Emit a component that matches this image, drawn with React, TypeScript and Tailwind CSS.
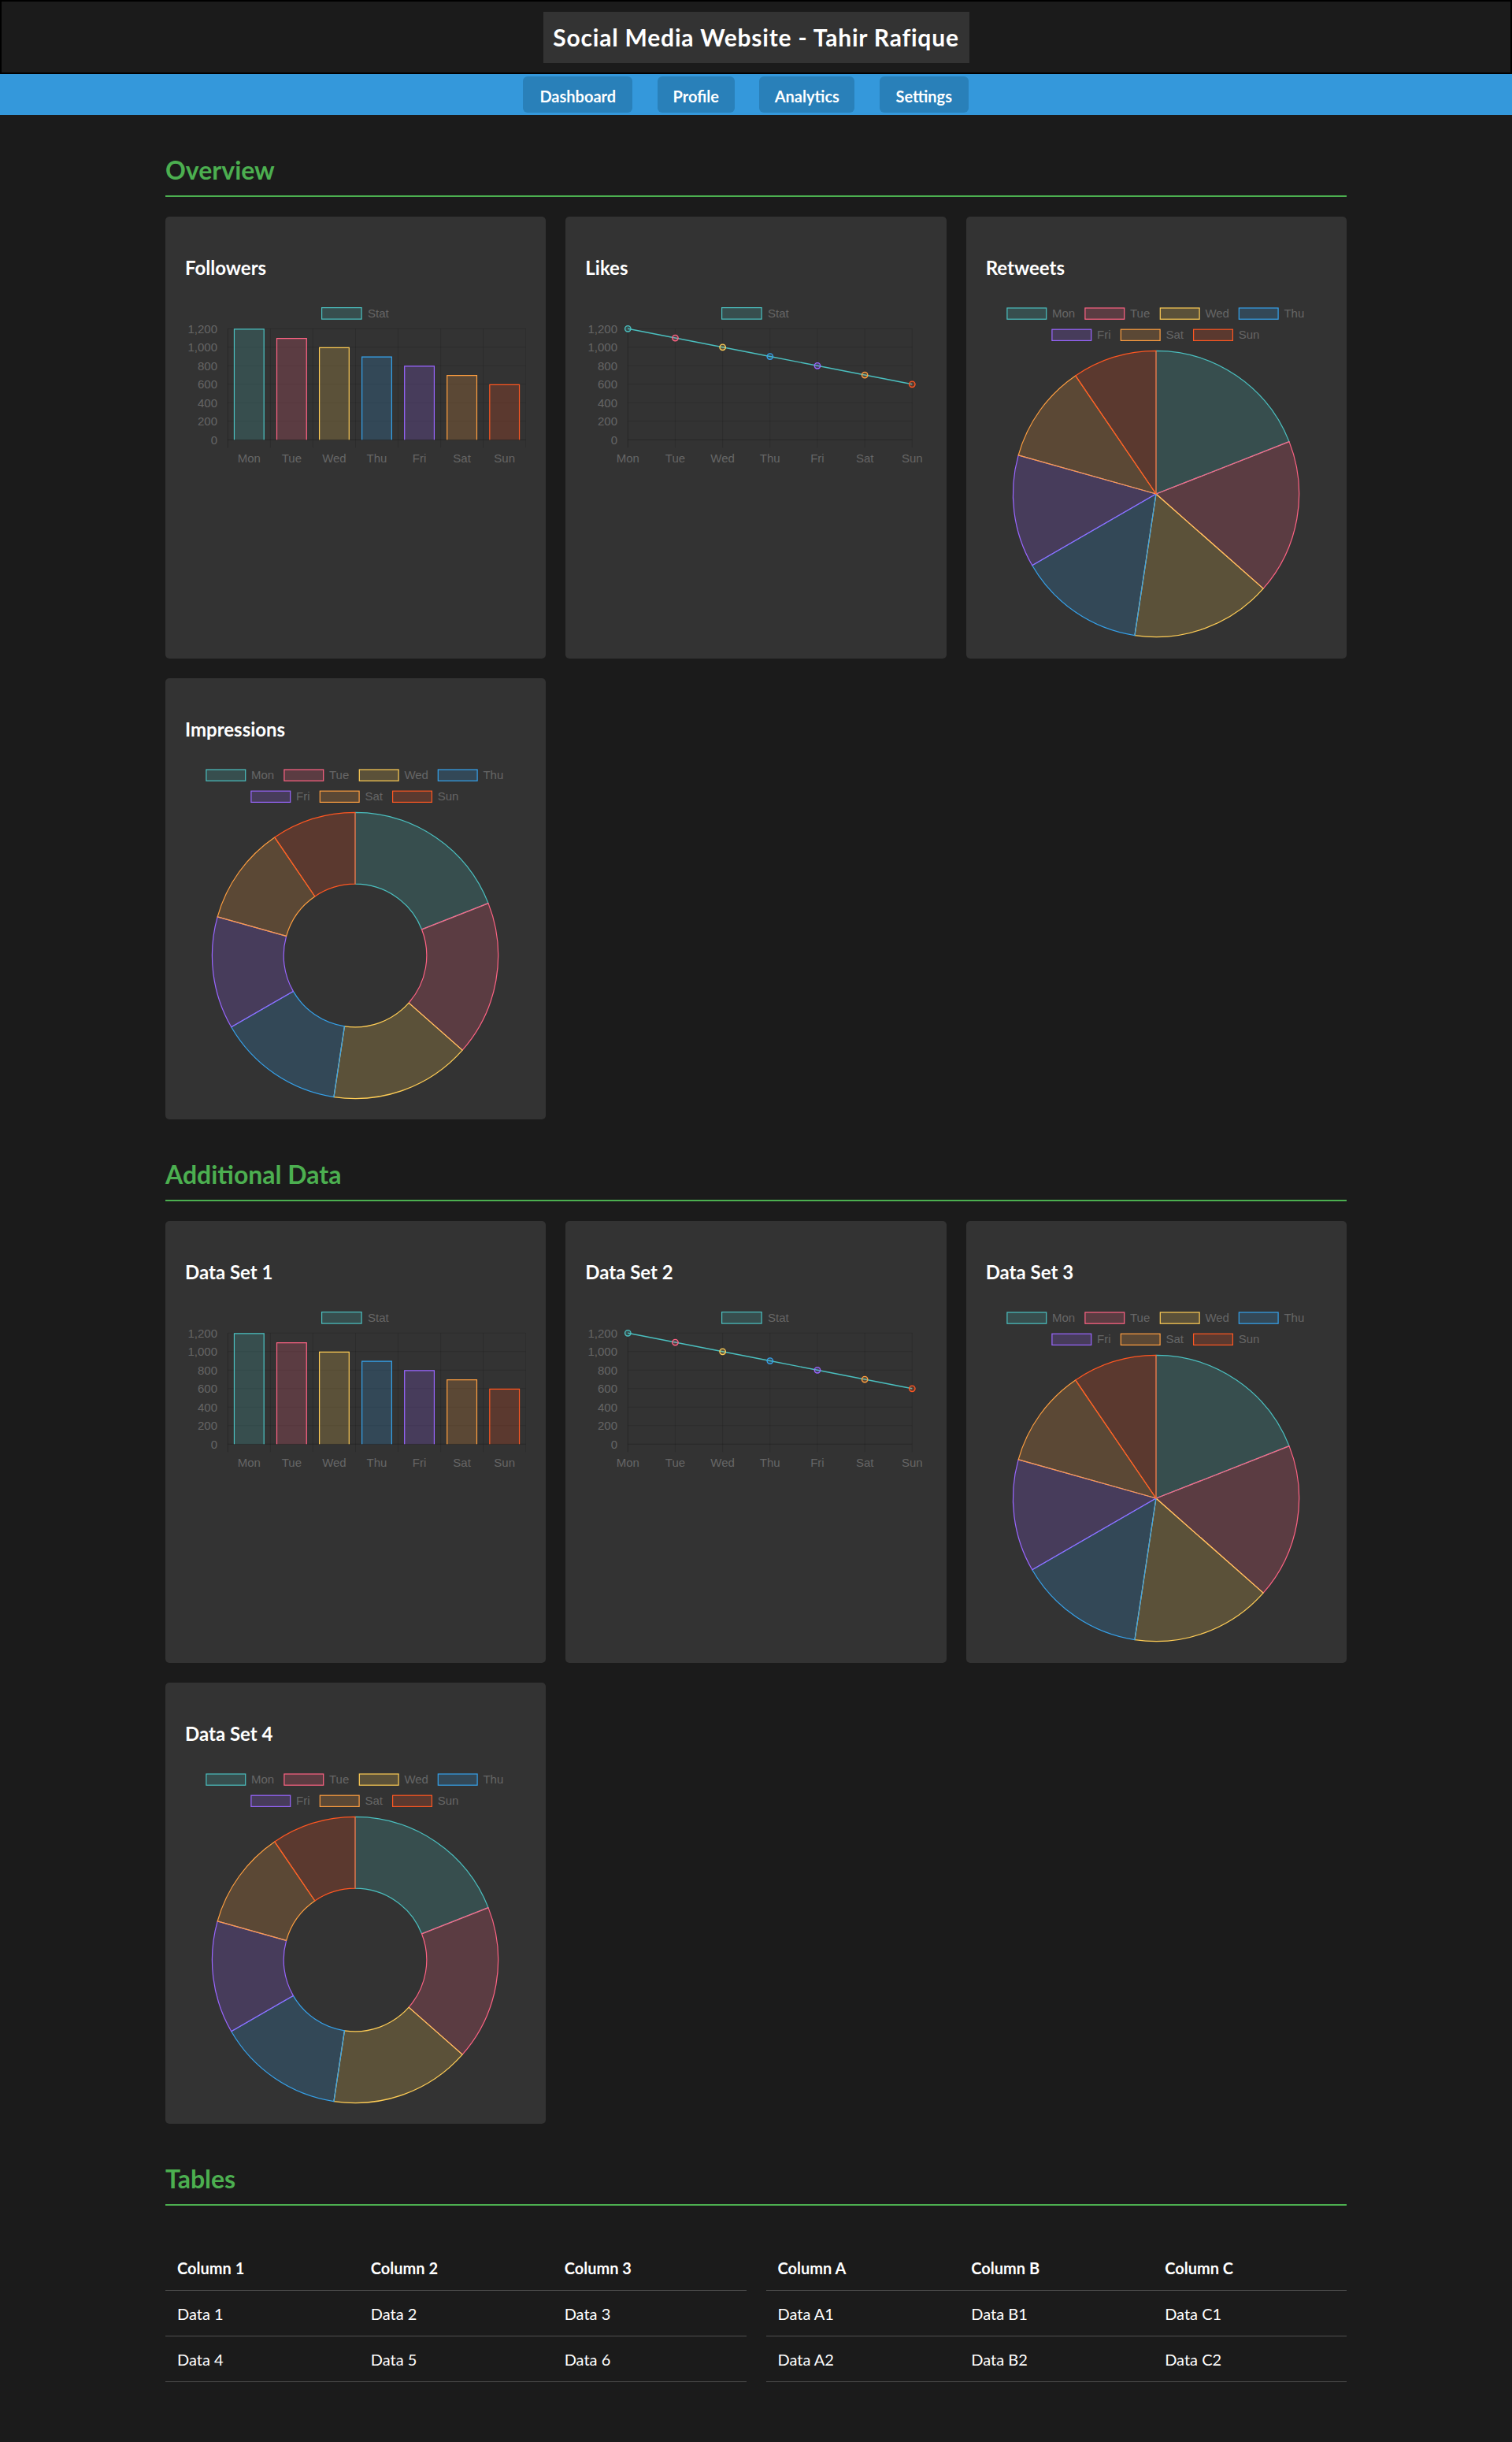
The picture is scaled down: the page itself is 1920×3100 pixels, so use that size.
import React from "react";

const DAYS = ["Mon", "Tue", "Wed", "Thu", "Fri", "Sat", "Sun"];
const VALUES = [1200, 1100, 1000, 900, 800, 700, 600];
const RGB = [
  "75,192,192",
  "255,99,132",
  "255,205,86",
  "54,162,235",
  "153,102,255",
  "255,159,64",
  "255,87,34",
];
const BORDER = RGB.map((c) => `rgb(${c})`);
const FILL = RGB.map((c) => `rgba(${c},0.2)`);
const GRID = "rgba(0,0,0,0.12)";
const AXIS = "rgba(0,0,0,0.22)";
const TICK = "#666";
const FONT = "'Liberation Sans', Arial, Helvetica, sans-serif";
const W = 433;
const H = 454.5;

const TOP = 61.3;
const BOTTOM = 202.3;
const TICKS = [0, 200, 400, 600, 800, 1000, 1200];
const yOf = (v: number) => BOTTOM - (v / 1200) * (BOTTOM - TOP);

function ChartText({
  x,
  y,
  anchor = "start",
  children,
}: {
  x: number;
  y: number;
  anchor?: "start" | "middle" | "end";
  children: React.ReactNode;
}) {
  return (
    <text x={x} y={y} textAnchor={anchor} fill={TICK} fontSize={15} fontFamily={FONT}>
      {children}
    </text>
  );
}

function StatLegend() {
  return (
    <g>
      <rect x={173.6} y={34.6} width={50.5} height={14.5} fill={FILL[0]} stroke={BORDER[0]} strokeWidth={1.2} />
      <ChartText x={232} y={46.7}>
        Stat
      </ChartText>
    </g>
  );
}

function YAxis({ left, right }: { left: number; right: number }) {
  return (
    <g>
      {TICKS.map((v) => {
        const y = yOf(v);
        return (
          <g key={v}>
            <line x1={left} x2={right} y1={y} y2={y} stroke={v === 0 ? AXIS : GRID} strokeWidth={1} />
            <ChartText x={41} y={y + 5.3} anchor="end">
              {v.toLocaleString("en-US")}
            </ChartText>
          </g>
        );
      })}
    </g>
  );
}

function BarChart() {
  const left = 54.3;
  const right = 432.7;
  const cw = (right - left) / 7;
  const bw = cw * 0.72;
  return (
    <svg width={W} height={H} className="block">
      <StatLegend />
      <YAxis left={left} right={right} />
      {Array.from({ length: 8 }).map((_, k) => {
        const x = left + k * cw;
        return <line key={k} x1={x} x2={x} y1={TOP} y2={BOTTOM + 10} stroke={k === 0 ? AXIS : GRID} strokeWidth={1} />;
      })}
      {VALUES.map((v, i) => {
        const cx = left + (i + 0.5) * cw;
        const x0 = cx - bw / 2;
        const x1 = cx + bw / 2;
        const yt = yOf(v);
        return (
          <g key={i}>
            <rect x={x0} y={yt} width={bw} height={BOTTOM - yt} fill={FILL[i]} />
            <polyline
              points={`${x0 + 0.6},${BOTTOM} ${x0 + 0.6},${yt + 0.6} ${x1 - 0.6},${yt + 0.6} ${x1 - 0.6},${BOTTOM}`}
              fill="none"
              stroke={BORDER[i]}
              strokeWidth={1.2}
            />
          </g>
        );
      })}
      {DAYS.map((d, i) => (
        <ChartText key={d} x={left + (i + 0.5) * cw} y={230.7} anchor="middle">
          {d}
        </ChartText>
      ))}
    </svg>
  );
}

function LineChart() {
  const left = 54.3;
  const right = 415.3;
  const step = (right - left) / 6;
  const pts = VALUES.map((v, i) => [left + i * step, yOf(v)]);
  return (
    <svg width={W} height={H} className="block">
      <StatLegend />
      <YAxis left={left} right={right} />
      {DAYS.map((_, k) => {
        const x = left + k * step;
        return <line key={k} x1={x} x2={x} y1={TOP} y2={BOTTOM + 10} stroke={k === 0 ? AXIS : GRID} strokeWidth={1} />;
      })}
      <polyline points={pts.map((p) => p.join(",")).join(" ")} fill="none" stroke={BORDER[0]} strokeWidth={1.4} />
      {pts.map((p, i) => (
        <circle key={i} cx={p[0]} cy={p[1]} r={3.7} fill={FILL[i]} stroke={BORDER[i]} strokeWidth={1.4} />
      ))}
      {DAYS.map((d, i) => (
        <ChartText key={d} x={left + i * step} y={230.7} anchor="middle">
          {d}
        </ChartText>
      ))}
    </svg>
  );
}

const LEGEND_ITEMS: { box: number; text: number; row: number }[] = [
  { box: 26.3, text: 84, row: 0 },
  { box: 125.3, text: 183, row: 0 },
  { box: 220.7, text: 278.4, row: 0 },
  { box: 320.7, text: 378.4, row: 0 },
  { box: 83.3, text: 141, row: 1 },
  { box: 170.7, text: 228.4, row: 1 },
  { box: 263, text: 320.7, row: 1 },
];

function DayLegend() {
  return (
    <g>
      {LEGEND_ITEMS.map((it, i) => {
        const y = it.row === 0 ? 34.4 : 61.6;
        const ty = it.row === 0 ? 46.9 : 74.4;
        return (
          <g key={i}>
            <rect x={it.box + 0.6} y={y + 0.6} width={49.8} height={14.2} fill={FILL[i]} stroke={BORDER[i]} strokeWidth={1.2} />
            <ChartText x={it.text} y={ty}>
              {DAYS[i]}
            </ChartText>
          </g>
        );
      })}
    </g>
  );
}

function PieChart({ cutout }: { cutout: number }) {
  const cx = 216;
  const cy = 271;
  const rx = 181.6;
  const ry = 181.6;
  const irx = rx * cutout;
  const iry = ry * cutout;
  const total = VALUES.reduce((a, b) => a + b, 0);
  let a0 = -Math.PI / 2;
  const slices = VALUES.map((v, i) => {
    const a1 = a0 + (v / total) * Math.PI * 2;
    const large = a1 - a0 > Math.PI ? 1 : 0;
    const p = (a: number, sx: number, sy: number) => `${(cx + sx * Math.cos(a)).toFixed(2)},${(cy + sy * Math.sin(a)).toFixed(2)}`;
    let d: string;
    if (cutout > 0) {
      d = `M${p(a0, rx, ry)} A${rx},${ry} 0 ${large} 1 ${p(a1, rx, ry)} L${p(a1, irx, iry)} A${irx},${iry} 0 ${large} 0 ${p(a0, irx, iry)} Z`;
    } else {
      d = `M${cx},${cy} L${p(a0, rx, ry)} A${rx},${ry} 0 ${large} 1 ${p(a1, rx, ry)} Z`;
    }
    a0 = a1;
    return <path key={i} d={d} fill={FILL[i]} stroke={BORDER[i]} strokeWidth={1.2} strokeLinejoin="round" />;
  });
  return (
    <svg width={W} height={H} className="block">
      <DayLegend />
      {slices}
    </svg>
  );
}

function Card({ title, children }: { title: string; children: React.ReactNode }) {
  return (
    <div className="bg-[#333333] rounded-[5px] p-[25px]">
      <h3 className="mt-[24px] text-[24px] leading-[32px] font-bold text-white">{title}</h3>
      {children}
    </div>
  );
}

function SectionTitle({ children }: { children: React.ReactNode }) {
  return (
    <h2 className="mt-[50px] text-[32px] leading-[40px] font-bold text-[#4caf50] pb-[12px] border-b-2 border-[#4caf50]">
      {children}
    </h2>
  );
}

function ChartGrid({ titles }: { titles: string[] }) {
  return (
    <div className="mt-[25px] grid grid-cols-3 gap-[25px]">
      <Card title={titles[0]}>
        <BarChart />
      </Card>
      <Card title={titles[1]}>
        <LineChart />
      </Card>
      <Card title={titles[2]}>
        <PieChart cutout={0} />
      </Card>
      <Card title={titles[3]}>
        <PieChart cutout={0.5} />
      </Card>
    </div>
  );
}

function DataTable({ headers, rows }: { headers: string[]; rows: string[][] }) {
  return (
    <table className="w-full table-fixed border-collapse">
      <thead>
        <tr className="border-b border-[#4f4f4f]">
          {headers.map((h) => (
            <th key={h} className="text-left font-bold text-[20px] leading-[27px] pl-[15px] pt-[16px] pb-[14px] text-white">
              {h}
            </th>
          ))}
        </tr>
      </thead>
      <tbody>
        {rows.map((r, i) => (
          <tr key={i} className="border-b border-[#4f4f4f]">
            {r.map((c) => (
              <td key={c} className="text-left font-normal text-[20px] leading-[27px] pl-[15px] pt-[16px] pb-[14px] text-white">
                {c}
              </td>
            ))}
          </tr>
        ))}
      </tbody>
    </table>
  );
}

const NAV = [
  { label: "Dashboard", w: "w-[139px]" },
  { label: "Profile", w: "w-[98px]" },
  { label: "Analytics", w: "w-[121px]" },
  { label: "Settings", w: "w-[113px]" },
];

export default function App() {
  return (
    <div className="min-h-screen bg-[#1b1b1b] font-['Lato',sans-serif] text-white">
      <header className="h-[94px] border-2 border-black flex items-center justify-center">
        <h1 className="w-[541px] h-[65px] bg-[#333333] flex items-center justify-center text-[30px] leading-[40px] tracking-[0.8px] font-bold text-white whitespace-nowrap">
          Social Media Website - Tahir Rafique
        </h1>
      </header>
      <nav className="h-[52px] bg-[#3498db] flex items-center justify-center gap-[31.5px] pr-[26px]">
        {NAV.map((n) => (
          <a
            key={n.label}
            className={`${n.w} h-[46px] pt-[3px] flex items-center justify-center rounded-[6px] bg-[#2980b9] text-white font-bold text-[20px] leading-[28px]`}
          >
            {n.label}
          </a>
        ))}
      </nav>
      <main className="w-[1500px] mx-auto">
        <section>
          <SectionTitle>Overview</SectionTitle>
          <ChartGrid titles={["Followers", "Likes", "Retweets", "Impressions"]} />
        </section>
        <section>
          <SectionTitle>Additional Data</SectionTitle>
          <ChartGrid titles={["Data Set 1", "Data Set 2", "Data Set 3", "Data Set 4"]} />
        </section>
        <section>
          <SectionTitle>Tables</SectionTitle>
          <div className="mt-[50px] grid grid-cols-2 gap-[25px]">
            <DataTable
              headers={["Column 1", "Column 2", "Column 3"]}
              rows={[
                ["Data 1", "Data 2", "Data 3"],
                ["Data 4", "Data 5", "Data 6"],
              ]}
            />
            <DataTable
              headers={["Column A", "Column B", "Column C"]}
              rows={[
                ["Data A1", "Data B1", "Data C1"],
                ["Data A2", "Data B2", "Data C2"],
              ]}
            />
          </div>
        </section>
      </main>
    </div>
  );
}
